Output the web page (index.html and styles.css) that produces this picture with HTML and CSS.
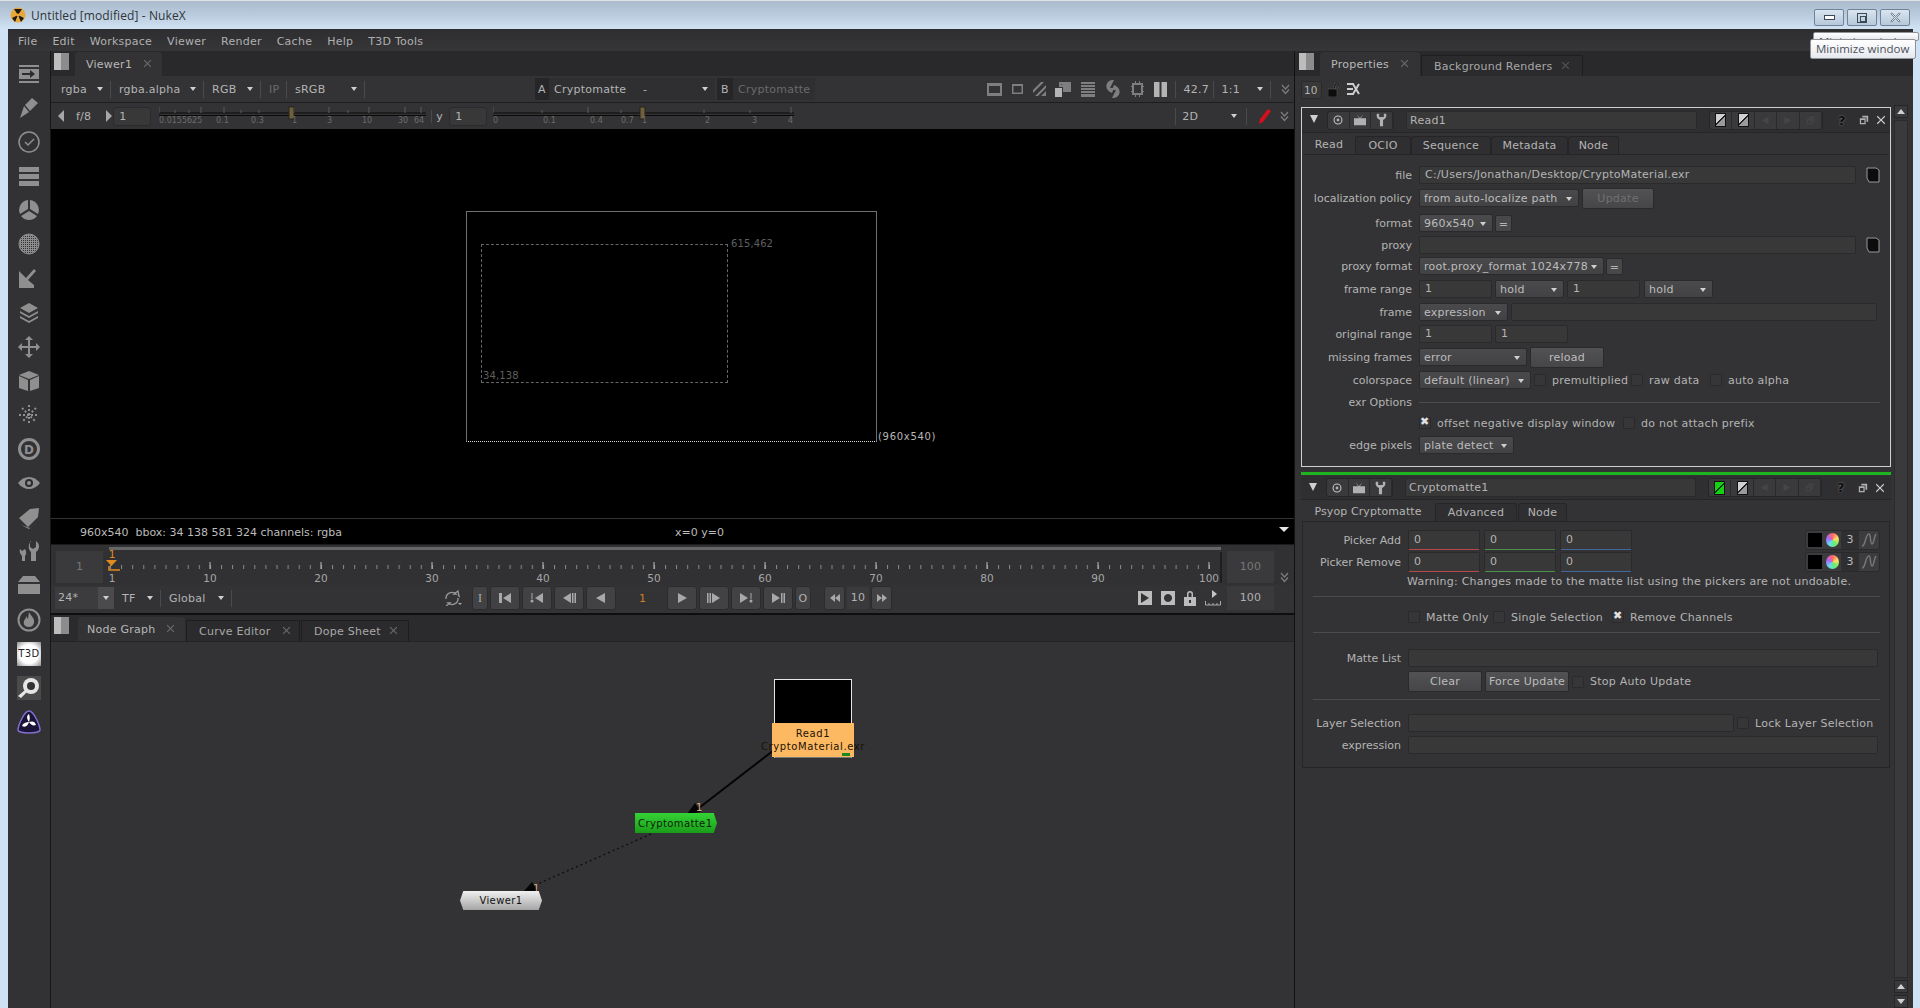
FILE: index.html
```html
<!DOCTYPE html>
<html lang="en">
<head>
    <meta charset="UTF-8">
    <title>Untitled [modified] - NukeX</title>
    <link rel="stylesheet" href="styles.css">
</head>
<body>
    <svg class="defs" width="0" height="0">
        <defs>
            <symbol id="i-play" viewBox="0 0 12 12"><path d="M2 1l9 5-9 5z"/></symbol>
            <symbol id="i-back" viewBox="0 0 12 12"><path d="M10 1L1 6l9 5z"/></symbol>
            <symbol id="i-first" viewBox="0 0 14 12"><path d="M1 1h3v10H1zM13 1L5 6l8 5z"/></symbol>
            <symbol id="i-last" viewBox="0 0 14 12"><path d="M1 1l8 5-8 5zM10 1h1.500v10H10zM12.500 1H14v10h-1.500z"/></symbol>
            <symbol id="i-stepb" viewBox="0 0 14 12"><path d="M9 1L1 6l8 5zM10 1h1.500v10H10zM12.500 1H14v10h-1.500z"/></symbol>
            <symbol id="i-stepf" viewBox="0 0 14 12"><path d="M0 1h1.500v10H0zM2.500 1H4v10H2.500zM5 1l8 5-8 5z"/></symbol>
            <symbol id="i-keyb" viewBox="0 0 14 12"><path d="M13 1L5 6l8 5z"/><circle cx="2" cy="9" r="1.500"/><path d="M1.500 1h1v6h-1z"/></symbol>
            <symbol id="i-keyf" viewBox="0 0 14 12"><path d="M1 1l8 5-8 5z"/><circle cx="12" cy="9" r="1.500"/><path d="M11.500 1h1v6h-1z"/></symbol>
            <symbol id="i-rew" viewBox="0 0 12 12"><path d="M6 2L1 6l5 4zM11 2L6 6l5 4z"/></symbol>
            <symbol id="i-fwd" viewBox="0 0 12 12"><path d="M1 2l5 4-5 4zM6 2l5 4-5 4z"/></symbol>
            <symbol id="i-tv" viewBox="0 0 16 14"><path d="M1 5h14v8H1zM4 0l4 5-1 0zM12 0L8 5l1 0z"/></symbol>
            <symbol id="i-wrench" viewBox="0 0 14 18"><path d="M1 1c-1 4 1 7 4 8v8h4V9c3-1 5-4 4-8l-3 0v4H4V1z"/></symbol>
            <symbol id="i-dot" viewBox="0 0 14 14"><circle cx="7" cy="7" r="5.500" fill="none" stroke="currentColor" stroke-width="1.500"/><circle cx="7" cy="7" r="2"/></symbol>
            <symbol id="i-float" viewBox="0 0 12 12"><path d="M4 1h7v7H9V3H4zM1 4h7v7H1zm1.500 2v3.500h4V6z"/></symbol>
            <symbol id="i-close" viewBox="0 0 12 12"><path d="M2 1l4 4 4-4 1 1-4 4 4 4-1 1-4-4-4 4-1-1 4-4-4-4z"/></symbol>
            <symbol id="i-folder" viewBox="0 0 14 16"><path d="M1 1h9l3 2v12H3L1 11z" fill="#0c0c0c" stroke="#999" stroke-width="1"/></symbol>
            <symbol id="i-curve" viewBox="0 0 16 16"><path d="M1 14C5 14 4 2 8 2c2 0 1 10 3 10 2 0 2-8 4-10" fill="none" stroke="currentColor" stroke-width="1.500"/></symbol>
            <symbol id="i-chev" viewBox="0 0 9 11"><path d="M1 1l3.500 4L8 1M1 5.500l3.500 4 3.500-4" fill="none" stroke="#7d7d7d" stroke-width="1.200"/></symbol>
        </defs>
    </svg>

    <header class="titlebar">
        <svg class="app-logo" width="16" height="16" viewBox="0 0 16 16">
            <circle cx="8" cy="8" r="7.500" fill="#e9a93a"/>
            <path d="M8 8L4 2h8zM8 8l6 3-3 4zM8 8l-6 3 3 4z" fill="#1d1a14"/>
            <circle cx="8" cy="8" r="1.500" fill="#e9a93a"/>
        </svg>
        <span class="title-text">Untitled [modified] - NukeX</span>
        <div class="win-buttons">
            <button class="win-btn"><span class="win-min"></span></button>
            <button class="win-btn"><span class="win-max"></span></button>
            <button class="win-btn"><svg width="13" height="11" viewBox="0 0 12 12"><use href="#i-close" fill="#e8eef5" stroke="#4b5a6a" stroke-width=".8"/></svg></button>
        </div>
        <div class="tooltip tooltip-ghost">Minimize window</div>
        <div class="tooltip">Minimize window</div>
    </header>

    <div class="app">
        <nav class="menubar">
            <span>File</span><span>Edit</span><span>Workspace</span><span>Viewer</span><span>Render</span><span>Cache</span><span>Help</span><span>T3D Tools</span>
        </nav>

        <div class="workspace">
            <aside class="sidebar">
                <svg viewBox="0 0 24 24"><path d="M2 3h20v2H2zM2 19h20v2H2zM2 7h20v10H2z"/><path d="M5 11h8V8l5 4-5 4v-3H5z" fill="#2c2c2e"/></svg>
                <svg viewBox="0 0 24 24"><path d="M8 9l7-7 6 5-8 8zM7 10l5 6-9 6z"/></svg>
                <svg viewBox="0 0 24 24"><circle cx="12" cy="12" r="10" fill="none" stroke="#8f8f8f" stroke-width="1.500"/><path d="M8 12l3 3 6-6" fill="none" stroke="#8f8f8f" stroke-width="1.500"/></svg>
                <svg viewBox="0 0 24 24"><path d="M2 3h20v5H2zM2 10h20v5H2zM2 17h20v5H2z"/></svg>
                <svg viewBox="0 0 24 24"><path d="M11 2v9l-8 5A10 10 0 0 1 11 2zM13 2a10 10 0 0 1 8 14l-8-5zM4 18l8-5 8 5a10 10 0 0 1-16 0z"/></svg>
                <svg viewBox="0 0 24 24"><defs><pattern id="hatch" width="2" height="2" patternUnits="userSpaceOnUse"><rect width="2" height="2" fill="#8c8c8c"/><rect width="1" height="1" fill="#333"/></pattern></defs><circle cx="12" cy="12" r="10" fill="url(#hatch)" stroke="#8f8f8f"/></svg>
                <svg viewBox="0 0 24 24"><path d="M2 4l7 7 8-9 2 2-8 9 6 5v3H2z"/></svg>
                <svg viewBox="0 0 24 24"><path d="M12 2l9 5-9 5-9-5zM3 10l9 5 9-5v2l-9 5-9-5zM3 15l9 5 9-5v2l-9 5-9-5z"/></svg>
                <svg viewBox="0 0 24 24"><path d="M12 1l4 4h-3v6h6V8l4 4-4 4v-3h-6v6h3l-4 4-4-4h3v-6H5v3l-4-4 4-4v3h6V5H8z"/></svg>
                <svg viewBox="0 0 24 24"><path d="M12 2l10 4-10 4L2 6zM2 7l9 4v11l-9-3zM22 7l-9 4v11l9-3z"/></svg>
                <svg viewBox="0 0 24 24"><g fill="none" stroke="#8f8f8f" stroke-width="2" stroke-dasharray="2 2"><path d="M12 2v20M2 12h20M5 5l14 14M19 5L5 19"/></g></svg>
                <svg viewBox="0 0 24 24"><circle cx="12" cy="12" r="9.500" fill="none" stroke="#8f8f8f" stroke-width="3"/><text x="12" y="16.500" text-anchor="middle" class="deep-letter">D</text></svg>
                <svg viewBox="0 0 24 24"><path d="M1 12c6-8 16-8 22 0-6 8-16 8-22 0z"/><circle cx="12" cy="12" r="4" fill="#2c2c2e"/><circle cx="12" cy="12" r="2"/></svg>
                <svg viewBox="0 0 24 24"><path d="M2 13L13 4l9-1-1 9-10 10zM4 20l9 3 8-7-9 8z"/></svg>
                <svg viewBox="0 0 24 24"><path d="M13 2v6l3 2 3-2V2c4 3 4 8 0 11v9h-5v-9c-3-2-3-8 0-11zM3 10l2 2 3-2c2 3 1 6 0 7v5H5v-5c-2-2-3-5-2-7z"/></svg>
                <svg viewBox="0 0 24 24"><path d="M6 3h12l5 6H1zM1 11h22v10H1z"/></svg>
                <svg viewBox="0 0 24 24"><circle cx="12" cy="12" r="10.500" fill="none" stroke="#8f8f8f" stroke-width="2"/><path d="M12 4c2 4 6 6 5 11-1 3-3 4-5 4-4 0-6-3-5-6 1-2 2-2 2-5l2 3z"/></svg>
                <div class="t3d-icon">T3D</div>
                <svg class="big-icon" viewBox="0 0 24 24"><rect width="24" height="24" fill="#4a4a4a"/><circle cx="14" cy="10" r="8" fill="#e6e6e6"/><circle cx="14" cy="10" r="4" fill="#333"/><path d="M1 20l7-6 2 2-6 6z" fill="#e6e6e6"/></svg>
                <svg class="big-icon" viewBox="0 0 24 24"><path d="M12 1c5 0 11 15 11 19 0 2-6 3-11 3S1 22 1 20C1 16 7 1 12 1z" fill="#1b1436" stroke="#7f6fd0" stroke-width="1.500"/><path d="M12 12c-2-3-3-6 0-8 1 3 1 5 0 8zM12 12c3-1 6-1 7 3-3 1-5 0-7-3zM12 12c-1 3-3 6-7 4 1-3 4-4 7-4z" fill="#fff"/></svg>
            </aside>

            <main class="left">
                <div class="tabbar">
                    <span class="pane-icon"></span>
                    <span class="tab tab-on tab-viewer">Viewer1<svg width="9" height="9"><use href="#i-close"/></svg></span>
                </div>

                <div class="toolbar">
                    <span class="tool w50">rgba<i class="caret"></i></span>
                    <span class="tool w93">rgba.alpha<i class="caret"></i></span>
                    <span class="tool w57">RGB<i class="caret"></i></span>
                    <span class="tool w26 dim">IP</span>
                    <span class="tool w78">sRGB<i class="caret"></i></span>
                    <span class="abox first-abox">A</span>
                    <span class="inbox w81">Cryptomatte</span>
                    <span class="inbox w85 dash">-<i class="caret"></i></span>
                    <span class="abox bbox-gap">B</span>
                    <span class="inbox w82 dim">Cryptomatte</span>
                    <div class="tool-icons">
                        <svg width="15" height="15" viewBox="0 0 15 15"><path d="M0 1h15v13H0zm2 3v7h11V4z"/></svg>
                        <svg width="11" height="12" viewBox="0 0 11 12"><path d="M0 1h11v10H0zm1.500 2v6.500h8V3z"/></svg>
                        <svg width="13" height="14" viewBox="0 0 13 14"><path d="M0 8l8-8h3L0 11zM2 14L13 3v3l-8 8zM8 14l5-5v5z"/></svg>
                        <svg width="16" height="15" viewBox="0 0 16 15"><path d="M4 0h12v10H8V5H4zm2 2v1h8v5h-4V5z"/><path d="M0 6h7v9H0z" fill="#b4b4b4"/></svg>
                        <svg width="14" height="15" viewBox="0 0 14 15"><path d="M0 0h14v2H0zM0 3h14v2H0zM0 6h14v2H0zM0 9h14v2H0zM0 12h14v3H0z"/></svg>
                        <svg width="16" height="18" viewBox="0 0 16 18"><path d="M9 0L5 8h4L7 13C1 11 0 5 3 2c2-2 4-2 6-2zM7 18l4-8H7l2-5c6 2 7 8 4 11-2 2-4 2-6 2z"/></svg>
                        <svg width="13" height="16" viewBox="0 0 13 16"><path d="M4 0h1v2h3V0h1v2h3v3h1v1h-1v4h1v1h-1v3H9v2H8v-2H5v2H4v-2H1v-3H0v-1h1V6H0V5h1V2h3zM3 4v8h7V4z"/></svg>
                        <svg width="13" height="15" viewBox="0 0 13 15"><path d="M0 0h5.500v15H0zM7.500 0H13v15H7.500z" fill="#b4b4b4"/></svg>
                    </div>
                    <span class="tool zoom-val">42.7</span>
                    <span class="tool w57 ratio">1:1<i class="caret"></i></span>
                    <svg class="chevrons" width="9" height="11"><use href="#i-chev"/></svg>
                </div>

                <div class="toolbar toolbar-2">
                    <i class="arrow-l"></i>
                    <span class="fstop">f/8</span>
                    <i class="arrow-r"></i>
                    <span class="inbox gain-box">1</span>
                    <svg class="slider slider-a" width="267" height="24">
                        <path class="track" d="M0 9h267M0 11.500h267"/>
                        <path class="tick" d="M0 3v6M16 6v3M30 6v3M42 3v6M65 3v6M82 6v3M100 6v3M135 3v6M170 3v6M189 6v3M210 3v6M246 3v6M262 3v6"/>
                        <rect class="handle" x="130" y="3" width="5" height="12"/>
                        <text x="0" y="19">0.0155625</text><text x="57" y="19">0.1</text><text x="92" y="19">0.3</text><text x="133" y="19">1</text><text x="168" y="19">3</text><text x="203" y="19">10</text><text x="239" y="19">30</text><text x="255" y="19">64</text>
                    </svg>
                    <span class="y-label">y</span>
                    <span class="inbox gain-box">1</span>
                    <svg class="slider slider-b" width="301" height="24">
                        <path class="track" d="M0 9h301M0 11.500h301"/>
                        <path class="tick" d="M0 3v6M49 6v3M95 3v6M128 6v3M148 3v6M211 6v3M257 6v3M298 3v6"/>
                        <rect class="handle" x="147" y="3" width="5" height="12"/>
                        <text x="0" y="19">0</text><text x="50" y="19">0.1</text><text x="97" y="19">0.4</text><text x="128" y="19">0.7</text><text x="149" y="19">1</text><text x="212" y="19">2</text><text x="259" y="19">3</text><text x="295" y="19">4</text>
                    </svg>
                    <span class="tool view-mode">2D<i class="caret"></i></span>
                    <svg class="pen" width="12" height="15" viewBox="0 0 12 15"><path d="M9 0l3 2-8 11-4 2 1-5z" fill="#d3111c"/></svg>
                    <svg class="chevrons chev-2" width="9" height="11"><use href="#i-chev"/></svg>
                </div>

                <div class="viewport">
                    <div class="format-box"></div>
                    <div class="bbox-box"></div>
                    <span class="vp-label vp-tr">615,462</span>
                    <span class="vp-label vp-bl">34,138</span>
                    <span class="vp-label vp-size">(960x540)</span>
                </div>

                <div class="infobar">
                    <span class="info-main">960x540&nbsp; bbox: 34 138 581 324 channels: rgba</span>
                    <span class="info-pos">x=0 y=0</span>
                    <i class="info-arrow"></i>
                </div>

                <div class="timeline">
                    <span class="frame-box">1</span>
                    <svg class="ruler" width="1119" height="41">
                        <defs>
                            <pattern id="minor-ticks" x="7" width="11.100" height="41" patternUnits="userSpaceOnUse"><rect width="1" height="41" fill="#8a8a8a"/></pattern>
                        </defs>
                        <rect x="6" y="2" width="1112" height="3" fill="#666"/>
                        <rect x="7" y="20" width="1100" height="4" fill="url(#minor-ticks)"/>
                        <path class="major" d="M107 17v7M218 17v7M329 17v7M440 17v7M551 17v7M662 17v7M773 17v7M884 17v7M995 17v7M1106 17v7"/>
                        <path d="M1118 7v31" stroke="#0c0c0c"/>
                        <path d="M3 15h11l-5.500 6z" fill="#e08a1e"/><path d="M6 21v4h11" fill="none" stroke="#e08a1e" stroke-width="1.500"/>
                        <text class="cur" x="9" y="13">1</text>
                        <text x="9" y="37">1</text><text x="107" y="37">10</text><text x="218" y="37">20</text><text x="329" y="37">30</text><text x="440" y="37">40</text><text x="551" y="37">50</text><text x="662" y="37">60</text><text x="773" y="37">70</text><text x="884" y="37">80</text><text x="995" y="37">90</text><text x="1106" y="37">100</text>
                    </svg>
                    <span class="frame-box frame-end">100</span>
                    <svg class="chevrons chev-3" width="9" height="11"><use href="#i-chev"/></svg>
                </div>

                <div class="transport">
                    <span class="fps">24*</span><span class="fps-drop"><i class="caret"></i></span>
                    <span class="tool w39 tf">TF<i class="caret"></i></span>
                    <span class="tool w71">Global<i class="caret"></i></span>
                    <svg class="loop" width="18" height="16" viewBox="0 0 18 16"><path d="M2 9a6 6 0 0 1 10-5h-2l4-3 1 5-1-1M14 8a6 6 0 0 1-10 5h2l-4 3" fill="none" stroke="#999" stroke-width="1.300"/><path d="M14 13h4l-2 2z" fill="#aaa"/></svg>
                    <button class="tbtn w16 serif">I</button>
                    <button class="tbtn w30"><svg><use href="#i-first"/></svg></button>
                    <button class="tbtn w30"><svg><use href="#i-keyb"/></svg></button>
                    <button class="tbtn w30"><svg><use href="#i-stepb"/></svg></button>
                    <button class="tbtn w30"><svg><use href="#i-back"/></svg></button>
                    <span class="cur-frame">1</span>
                    <button class="tbtn w30"><svg><use href="#i-play"/></svg></button>
                    <button class="tbtn w30"><svg><use href="#i-stepf"/></svg></button>
                    <button class="tbtn w30"><svg><use href="#i-keyf"/></svg></button>
                    <button class="tbtn w30"><svg><use href="#i-last"/></svg></button>
                    <button class="tbtn w16">O</button>
                    <button class="tbtn w21 skip"><svg><use href="#i-rew"/></svg></button>
                    <span class="inc">10</span>
                    <button class="tbtn w21"><svg><use href="#i-fwd"/></svg></button>
                    <div class="transport-right">
                        <svg width="14" height="14" viewBox="0 0 14 14"><path fill-rule="evenodd" d="M0 0h14v14H0zM3 2v10l8-5z"/></svg>
                        <svg width="14" height="14" viewBox="0 0 14 14"><path fill-rule="evenodd" d="M0 0h14v14H0zM7 3a4 4 0 1 0 .01 0z"/></svg>
                        <svg width="12" height="16" viewBox="0 0 12 16"><path fill-rule="evenodd" d="M3 7V4a3 3 0 0 1 6 0v3h3v9H0V7zm1.500 0h3V4a1.500 1.500 0 0 0-3 0zM5 10v3h2v-3z"/></svg>
                        <svg width="16" height="16" viewBox="0 0 16 16"><path d="M7 0l5 4-5 4z" fill="#c4c4c4"/><path d="M.5 11v4h15v-4M4 13v2M8 13v2M12 13v2" fill="none" stroke="#aaa"/></svg>
                        <span class="frame-box frame-end tr-end">100</span>
                    </div>
                </div>

                <div class="pane-split"></div>

                <div class="tabbar tabbar-graph">
                    <span class="pane-icon"></span>
                    <span class="tab tab-on tab-node">Node Graph<svg width="9" height="9"><use href="#i-close"/></svg></span>
                    <span class="tab tab-curve">Curve Editor<svg width="9" height="9"><use href="#i-close"/></svg></span>
                    <span class="tab tab-dope">Dope Sheet<svg width="9" height="9"><use href="#i-close"/></svg></span>
                </div>

                <div class="nodegraph">
                    <svg class="edges" width="1243" height="367">
                        <path d="M723 108L644 169" stroke="#050505" stroke-width="2"/>
                        <path d="M636 172l14-2-6-9z" fill="#050505"/>
                        <path d="M600 192L482 244" stroke="#111" stroke-width="1.500" stroke-dasharray="2 3"/>
                        <path d="M473 249l14 0-6-9z" fill="#050505"/>
                        <text x="645" y="169">1</text>
                        <text x="482" y="250">1</text>
                    </svg>
                    <div class="node-read">
                        <div class="read-thumb"></div>
                        <div class="read-label"><span>Read1</span><span>CryptoMaterial.exr</span><i class="read-dot"></i></div>
                    </div>
                    <div class="node-crypto">Cryptomatte1</div>
                    <div class="node-viewer">Viewer1</div>
                </div>
            </main>

            <section class="right">
                <div class="tabbar">
                    <span class="pane-icon pane-right"></span>
                    <span class="tab tab-on tab-props">Properties<svg width="9" height="9"><use href="#i-close"/></svg></span>
                    <span class="tab tab-bg">Background Renders<svg width="9" height="9"><use href="#i-close"/></svg></span>
                </div>
                <div class="props-tools">
                    <span class="inbox max-panels">10</span>
                    <svg width="13" height="14" viewBox="0 0 13 14"><path d="M0 6h9v8H0zM6 6V3a3 3 0 0 1 6 0v2h-1.500V3a1.500 1.500 0 0 0-3 0v3z" fill="#0d0d0d" stroke="#666" stroke-width=".5"/></svg>
                    <svg width="13" height="12" viewBox="0 0 13 12"><path d="M0 0h7v2H0zM0 5h6v2H0zM0 10h7v2H0z" fill="#ccc"/><path d="M6 1l6 10M12 1L6 11" stroke="#ccc" stroke-width="2"/></svg>
                </div>

                <div class="props-scroll">
                    <div class="props-col">
                        <section class="panel panel-read">
                            <div class="panel-head">
                                <i class="head-arrow"></i>
                                <div class="head-group">
                                    <span><svg width="10" height="10"><use href="#i-dot"/></svg></span>
                                    <span><svg width="14" height="12"><use href="#i-tv"/></svg></span>
                                    <span><svg width="11" height="14"><use href="#i-wrench"/></svg></span>
                                </div>
                                <span class="inbox head-name">Read1</span>
                                <div class="head-group head-colors">
                                    <span><i class="swatch"></i></span>
                                    <span><i class="swatch"></i></span>
                                    <span><svg class="ghost" width="11" height="9"><use href="#i-back"/></svg></span>
                                    <span><svg class="ghost" width="11" height="9"><use href="#i-play"/></svg></span>
                                    <span><svg class="ghost" width="11" height="9"><use href="#i-float"/></svg></span>
                                </div>
                                <span class="head-help">?</span>
                                <svg class="head-float" width="10" height="10"><use href="#i-float"/></svg>
                                <svg class="head-x" width="10" height="10"><use href="#i-close"/></svg>
                            </div>
                            <div class="knob-tabs">
                                <span class="ktab ktab-on ktab-read">Read</span>
                                <span class="ktab ktab-ocio">OCIO</span>
                                <span class="ktab ktab-seq">Sequence</span>
                                <span class="ktab ktab-meta">Metadata</span>
                                <span class="ktab ktab-node">Node</span>
                            </div>
                            <div class="knobs">
                                <div class="row"><label>file</label><span class="inbox w437">C:/Users/Jonathan/Desktop/CryptoMaterial.exr</span><svg class="folder" width="14" height="16"><use href="#i-folder"/></svg></div>
                                <div class="row mt1"><label>localization policy</label><span class="sel w160">from auto-localize path<i class="caret"></i></span><button class="btn w72 dim">Update</button></div>
                                <div class="row mt3"><label>format</label><span class="sel w74">960x540<i class="caret"></i></span><span class="eq">=</span></div>
                                <div class="row"><label>proxy</label><span class="inbox w437"></span><svg class="folder" width="14" height="16"><use href="#i-folder"/></svg></div>
                                <div class="row mt-1"><label>proxy format</label><span class="sel w185">root.proxy_format 1024x778<i class="caret"></i></span><span class="eq">=</span></div>
                                <div class="row mt1"><label>frame range</label><span class="inbox w73">1</span><span class="sel w69">hold<i class="caret"></i></span><span class="inbox w73">1</span><span class="sel w69 ml1">hold<i class="caret"></i></span></div>
                                <div class="row mt1"><label>frame</label><span class="sel w89">expression<i class="caret"></i></span><span class="inbox w366"></span></div>
                                <div class="row"><label>original range</label><span class="inbox w73">1</span><span class="inbox w73">1</span></div>
                                <div class="row mt1"><label>missing frames</label><span class="sel w108">error<i class="caret"></i></span><button class="btn w74">reload</button></div>
                                <div class="row mt1"><label>colorspace</label><span class="sel w112">default (linear)<i class="caret"></i></span><i class="cb"></i><span class="cb-text w76">premultiplied</span><i class="cb"></i><span class="cb-text w58">raw data</span><i class="cb"></i><span class="cb-text">auto alpha</span></div>
                                <div class="row"><label>exr Options</label><hr class="rule"></div>
                                <div class="row mt-1"><label></label><i class="cb cb-on"></i><span class="cb-text w183">offset negative display window</span><i class="cb"></i><span class="cb-text">do not attach prefix</span></div>
                                <div class="row"><label>edge pixels</label><span class="sel w95">plate detect<i class="caret"></i></span></div>
                            </div>
                        </section>

                        <div class="panel-bar"></div>

                        <section class="panel panel-crypto">
                            <div class="panel-head">
                                <i class="head-arrow"></i>
                                <div class="head-group">
                                    <span><svg width="10" height="10"><use href="#i-dot"/></svg></span>
                                    <span><svg width="14" height="12"><use href="#i-tv"/></svg></span>
                                    <span><svg width="11" height="14"><use href="#i-wrench"/></svg></span>
                                </div>
                                <span class="inbox head-name">Cryptomatte1</span>
                                <div class="head-group head-colors">
                                    <span><i class="swatch swatch-green"></i></span>
                                    <span><i class="swatch"></i></span>
                                    <span><svg class="ghost" width="11" height="9"><use href="#i-back"/></svg></span>
                                    <span><svg class="ghost" width="11" height="9"><use href="#i-play"/></svg></span>
                                    <span><svg class="ghost" width="11" height="9"><use href="#i-float"/></svg></span>
                                </div>
                                <span class="head-help">?</span>
                                <svg class="head-float" width="10" height="10"><use href="#i-float"/></svg>
                                <svg class="head-x" width="10" height="10"><use href="#i-close"/></svg>
                            </div>
                            <div class="knob-tabs">
                                <span class="ktab ktab-on ktab-psyop">Psyop Cryptomatte</span>
                                <span class="ktab ktab-adv">Advanced</span>
                                <span class="ktab ktab-node2">Node</span>
                            </div>
                            <div class="knobs knobs-crypto">
                                <div class="row row-20"><label>Picker Add</label><span class="inbox w72 line-r">0</span><span class="inbox w72 line-g">0</span><span class="inbox w72 line-b">0</span><div class="picker"><i class="pick-black"></i><i class="pick-wheel"></i><span>3</span><svg width="16" height="16"><use href="#i-curve"/></svg></div></div>
                                <div class="row row-20 mt-2"><label>Picker Remove</label><span class="inbox w72 line-r">0</span><span class="inbox w72 line-g">0</span><span class="inbox w72 line-b">0</span><div class="picker"><i class="pick-black"></i><i class="pick-wheel"></i><span>3</span><svg width="16" height="16"><use href="#i-curve"/></svg></div></div>
                                <div class="row row-16 mt-3"><label></label><span class="warn">Warning: Changes made to the matte list using the pickers are not undoable.</span></div>
                                <hr class="divider space-a">
                                <div class="row row-16"><label></label><i class="cb"></i><span class="cb-text w64">Matte Only</span><i class="cb"></i><span class="cb-text w98">Single Selection</span><i class="cb cb-on"></i><span class="cb-text">Remove Channels</span></div>
                                <hr class="divider space-b">
                                <div class="row"><label>Matte List</label><span class="inbox w470"></span></div>
                                <div class="row row-21"><label></label><button class="btn w74">Clear</button><button class="btn w84">Force Update</button><i class="cb"></i><span class="cb-text">Stop Auto Update</span></div>
                                <hr class="divider space-c">
                                <div class="row"><label>Layer Selection</label><span class="inbox w326"></span><i class="cb"></i><span class="cb-text">Lock Layer Selection</span></div>
                                <div class="row"><label>expression</label><span class="inbox w470"></span></div>
                            </div>
                        </section>
                    </div>

                    <div class="scrollbar">
                        <span class="sb-btn"><i class="sb-up"></i></span>
                        <span class="sb-track"></span>
                        <span class="sb-btn"><i class="sb-up"></i></span>
                        <span class="sb-btn"><i class="sb-down"></i></span>
                    </div>
                </div>
            </section>
        </div>
    </div>
</body>
</html>
```

FILE: styles.css
```css
* { margin: 0; padding: 0; box-sizing: border-box; }
html, body { width: 1920px; height: 1008px; overflow: hidden; }
body {
    background: #cfe2f5;
    font-family: "DejaVu Sans", sans-serif;
    font-size: 11px;
    letter-spacing: .25px;
    color: #b4b4b4;
}
.defs { position: absolute; }
i { display: block; font-style: normal; }
button { font: inherit; letter-spacing: inherit; color: inherit; border: none; }

/* window frame */
.titlebar {
    height: 29px;
    position: relative;
    display: flex;
    align-items: center;
    padding-left: 10px;
    background: linear-gradient(#a9bbcd, #b9cbdc 50%, #d0e3f5);
    border-top: 1px solid #dfe3e8;
    color: #30343a;
    font-family: "Open Sans", sans-serif;
    font-size: 12px;
    letter-spacing: .1px;
}
.title-text { margin-left: 5px; }
.win-buttons { position: absolute; top: 8px; right: 10px; display: flex; gap: 3px; }
.win-btn {
    width: 30px;
    height: 17px;
    display: flex;
    align-items: center;
    justify-content: center;
    background: linear-gradient(#d9e5f0, #b6c8da);
    border: 1px solid #6f8399;
    border-radius: 2px;
}
.win-min { width: 11px; height: 5px; border: 1px solid #3c4a58; background: #fff; display: block; }
.win-max { width: 10px; height: 10px; border: 1px solid #3c4a58; position: relative; display: block; }
.win-max::after { content: ""; position: absolute; left: 2px; top: 2px; width: 4px; height: 4px; border: 1px solid #3c4a58; }
.tooltip {
    position: absolute;
    z-index: 5;
    left: 1810px;
    top: 38px;
    width: 106px;
    height: 20px;
    padding: 1px 0 0 5px;
    background: linear-gradient(#fff, #e6e8ee);
    border: 1px solid #8f9398;
    border-radius: 2px;
    color: #4c5058;
    font-size: 11.500px;
    letter-spacing: 0;
    white-space: nowrap;
}
.tooltip-ghost { left: 1813px; top: 31px; height: 9px; overflow: hidden; z-index: 4; }

.app { width: 1905px; height: 979px; margin-left: 8px; background: #333335; display: flex; flex-direction: column; }
.menubar {
    height: 22px;
    flex: none;
    display: flex;
    align-items: center;
    gap: 15px;
    padding: 2px 0 0 10px;
    background: linear-gradient(#2e2e30, #363638);
    color: #b0b0b0;
}
.workspace { flex: 1; display: flex; min-height: 0; }

/* sidebar */
.sidebar {
    width: 43px;
    flex: none;
    padding-top: 11px;
    display: flex;
    flex-direction: column;
    align-items: center;
    gap: 10.100px;
    background: #323234;
    border-right: 1px solid #161616;
}
.sidebar svg { width: 24px; height: 24px; flex: none; fill: #8f8f8f; }
.deep-letter { font-size: 12px; font-weight: bold; fill: #8f8f8f; }
.t3d-icon {
    width: 24px;
    height: 24px;
    flex: none;
    background: radial-gradient(#fff 55%, #8a8a8a);
    color: #222;
    font-size: 10px;
    line-height: 24px;
    text-align: center;
    letter-spacing: .4px;
}

.left { width: 1243px; flex: none; display: flex; flex-direction: column; }
.right { width: 619px; flex: none; display: flex; flex-direction: column; border-left: 1px solid #111; }

/* tabs */
.tabbar { height: 25px; flex: none; display: flex; align-items: flex-end; background: #29292b; position: relative; }
.pane-icon {
    align-self: flex-start;
    margin: 2px 0 0 3px;
    width: 15px;
    height: 17px;
    background: linear-gradient(90deg, #bdbdbd 50%, #8c8c8c 50%);
}
.pane-right { margin-left: 4px; }
.tab {
    height: 21px;
    display: flex;
    align-items: center;
    color: #a8a8a8;
    border: 1px solid #1e1e20;
    border-bottom: none;
    background: #2b2b2d;
    position: relative;
}
.tab svg { position: absolute; right: 10px; top: 5px; fill: #6b6b6b; }
.tab-on { height: 24px; background: #333335; color: #b8b8b8; border: none; border-radius: 4px 4px 0 0; }
.tab-on svg { top: 7px; }
.tab-viewer { margin-left: 6px; width: 87px; padding-left: 11px; }
.tabbar-graph { height: 26px; background: #2b2b2d; }
.tab-node { margin-left: 9px; width: 107px; padding-left: 9px; }
.tab-curve { margin-left: 1px; width: 114px; padding-left: 12px; }
.tab-curve svg { right: 8px; }
.tab-dope { margin-left: 1px; width: 108px; padding-left: 12px; }
.tab-props { margin-left: 6px; width: 100px; padding-left: 11px; }
.tab-props svg { right: 11px; }
.tab-bg { margin-left: 1px; width: 162px; padding-left: 12px; }
.tab-bg svg { fill: #555; right: 12px; }

/* viewer toolbars */
.toolbar { height: 26px; flex: none; display: flex; align-items: center; padding-left: 10px; background: #333335; }
.toolbar-2 { height: 27px; padding-left: 0; border-top: 1px solid #1d1d1f; position: relative; }
.tool { position: relative; height: 17px; line-height: 17px; padding-left: 8px; border-right: 1px solid #4a4a4c; flex: none; }
.tool:first-child { padding-left: 0; }
.caret {
    position: absolute;
    right: 7px;
    top: 50%;
    margin-top: -2px;
    width: 0;
    height: 0;
    border-left: 3px solid transparent;
    border-right: 3px solid transparent;
    border-top: 4px solid #cfcfcf;
}
.dim { color: #6a6a6a; }
.w16 { width: 16px; }
.w21 { width: 21px; }
.w26 { width: 26px; }
.w30 { width: 30px; }
.w39 { width: 39px; }
.w50 { width: 50px; }
.w57 { width: 57px; }
.w58 { width: 58px; }
.w64 { width: 64px; }
.w69 { width: 69px; }
.w71 { width: 71px; }
.w72 { width: 72px; }
.w73 { width: 73px; }
.w74 { width: 74px; }
.w76 { width: 76px; }
.w78 { width: 78px; }
.w81 { width: 81px; }
.w82 { width: 82px; }
.w84 { width: 84px; }
.w85 { width: 85px; }
.w89 { width: 89px; }
.w93 { width: 93px; }
.w95 { width: 95px; }
.w98 { width: 98px; }
.w108 { width: 108px; }
.w112 { width: 112px; }
.w160 { width: 160px; }
.w183 { width: 183px; }
.w185 { width: 185px; }
.w326 { width: 326px; }
.w366 { width: 366px; }
.w437 { width: 437px; }
.w470 { width: 470px; }
.abox { width: 14px; height: 22px; line-height: 23px; text-align: center; background: #262628; flex: none; }
.first-abox { margin-left: 170px; }
.bbox-gap { margin-left: 2px; width: 16px; }
.inbox {
    height: 100%;
    line-height: 16px;
    padding-left: 5px;
    background: #383839;
    border: 1px solid #2a2a2c;
    border-radius: 2px;
    flex: none;
    white-space: nowrap;
    overflow: hidden;
    position: relative;
}
.toolbar > .inbox { height: 22px; line-height: 23px; background: #2f2f31; border: none; border-radius: 0; }
.dash { padding-left: 13px; }
.tool-icons { margin-left: 172px; display: flex; align-items: center; gap: 9.800px; fill: #7e7e7e; flex: none; }
.zoom-val { margin-left: 8px; padding-left: 8px; width: 39px; border-left: 1px solid #4a4a4c; overflow: hidden; }
.ratio { position: relative; padding-left: 8px; }
.chevrons { margin-left: 10px; flex: none; }
.arrow-l, .arrow-r { width: 0; height: 0; border-top: 6px solid transparent; border-bottom: 6px solid transparent; flex: none; }
.arrow-l { margin-left: 7px; border-right: 6px solid #a6a6a6; }
.arrow-r { margin-left: 15px; border-left: 6px solid #a6a6a6; }
.fstop { margin-left: 12px; }
.toolbar > .gain-box { margin-left: 1px; width: 38px; height: 19px; line-height: 18px; background: #383839; border: 1px solid #2a2a2c; border-radius: 3px; }
.slider { margin-left: 8px; flex: none; }
.slider text { font-size: 8px; letter-spacing: 0; fill: #6b6b6b; }
.track { stroke: #0a0a0a; fill: none; }
.tick { stroke: #5c5c5c; fill: none; }
.handle { fill: #6f5f3e; stroke: #2a2418; }
.y-label { margin-left: 5px; width: 12px; border-left: 1px solid #4a4a4c; padding-left: 4px; box-sizing: content-box; }
.slider-b { margin-left: 6px; }
.view-mode { margin-left: 381px; width: 72px; padding-left: 6px; border-left: 1px solid #4a4a4c; }
.view-mode .caret { right: 9px; }
.pen { margin-left: 12px; flex: none; }
.chev-2 { margin-left: 9px; }

/* viewer */
.viewport { height: 390px; flex: none; background: #000; position: relative; border-bottom: 1px solid #333; }
.format-box { position: absolute; left: 415px; top: 82px; width: 411px; height: 231px; border: 1px solid #6f6f6f; border-bottom: 1px dotted #ddd; }
.bbox-box { position: absolute; left: 430px; top: 115px; width: 247px; height: 139px; border: 1px dashed #666; }
.vp-label { position: absolute; font-size: 10px; letter-spacing: .1px; line-height: 12px; color: #5f5f5f; }
.vp-tr { left: 680px; top: 109px; }
.vp-bl { left: 432px; top: 241px; }
.vp-size { left: 827px; top: 302px; color: #b8b8b8; letter-spacing: .7px; }
.infobar { height: 25px; flex: none; position: relative; background: #000; color: #bcbcbc; line-height: 28px; }
.info-main { position: absolute; left: 29px; letter-spacing: 0; }
.info-pos { position: absolute; left: 624px; letter-spacing: 0; }
.info-arrow {
    position: absolute;
    left: 1228px;
    top: 8px;
    width: 0;
    height: 0;
    border-left: 5px solid transparent;
    border-right: 5px solid transparent;
    border-top: 5px solid #e4e4e4;
}

/* timeline */
.timeline { height: 41px; flex: none; display: flex; background: #313133; border-top: 1px solid #1b1b1d; padding-left: 5px; }
.frame-box { width: 47px; height: 32px; margin-top: 6px; background: #3a3a3c; text-align: center; line-height: 32px; color: #777; flex: none; }
.frame-end { margin-left: 5px; }
.ruler { flex: none; }
.ruler text { font-size: 10.500px; letter-spacing: 0; fill: #a6a6a6; text-anchor: middle; }
.ruler .cur { fill: #e08a1e; }
.major { stroke: #c0c0c0; fill: none; }
.chev-3 { margin: 27px 0 0 6px; }

.transport { height: 28px; flex: none; display: flex; align-items: center; padding: 0 0 2px 4px; background: #333335; }
.fps { width: 43px; height: 22px; line-height: 22px; padding-left: 3px; background: #3c3c3e; flex: none; }
.fps-drop { width: 16px; height: 22px; background: #4b4b4d; position: relative; flex: none; }
.fps-drop .caret { right: 5px; }
.tf { margin-left: 8px; padding-left: 0; }
.loop { margin-left: 212px; margin-right: 10px; flex: none; }
.tbtn {
    height: 24px;
    margin-right: 2px;
    display: flex;
    align-items: center;
    justify-content: center;
    background: #424244;
    border: 1px solid #2b2b2d;
    border-radius: 3px;
    color: #b0b0b0;
    flex: none;
}
.tbtn svg { width: 14px; height: 12px; fill: #a8a8a8; }
.serif { font-family: "Liberation Serif", serif; font-size: 12px; }
.cur-frame { width: 49px; text-align: center; color: #c9802a; flex: none; }
.skip { margin-left: 11px; }
.skip svg, .skip + .inc + .tbtn svg { width: 12px; }
.inc { width: 22px; margin-right: 2px; height: 22px; line-height: 22px; text-align: center; background: #3a3a3c; flex: none; }
.transport-right { margin-left: auto; display: flex; align-items: center; gap: 9px; fill: #bcbcbc; padding-right: 20px; }
.tr-end { margin: 0 0 0 -3px; height: 24px; line-height: 24px; color: #b0b0b0; }
.pane-split { height: 2px; flex: none; background: #0e0e10; }

/* node graph */
.nodegraph { flex: 1; position: relative; background: #333335; border-top: 1px solid #232325; overflow: hidden; }
.edges { position: absolute; left: 0; top: 0; }
.edges text { font-size: 10px; letter-spacing: 0; fill: #e0b080; }
.node-read { position: absolute; left: 723px; top: 37px; width: 78px; height: 79px; border: 1px solid #e6e6e6; border-bottom-color: #777; }
.read-thumb { height: 43px; background: #000; }
.read-label {
    position: relative;
    height: 34px;
    margin: 0 -3px;
    padding-top: 5px;
    display: flex;
    flex-direction: column;
    align-items: center;
    background: #fdb962;
    color: #1c1206;
    font-size: 10px;
    letter-spacing: .6px;
    line-height: 12.500px;
    white-space: nowrap;
}
.read-dot { position: absolute; right: 4px; bottom: 1px; width: 8px; height: 3px; background: #1d8a1d; }
.node-crypto {
    position: absolute;
    left: 584px;
    top: 171px;
    width: 82px;
    height: 20px;
    line-height: 21px;
    padding-left: 3px;
    background: linear-gradient(#35d435, #1a9c1a);
    color: #0a1f0a;
    font-size: 10px;
    letter-spacing: .4px;
    white-space: nowrap;
    clip-path: polygon(0 0, 96% 0, 100% 50%, 96% 100%, 0 100%);
}
.node-viewer {
    position: absolute;
    left: 409px;
    top: 249px;
    width: 82px;
    height: 19px;
    line-height: 20px;
    text-align: center;
    background: linear-gradient(#f0f0f0, #a5a5a5);
    color: #111;
    font-size: 10px;
    letter-spacing: .4px;
    clip-path: polygon(4% 0, 96% 0, 100% 50%, 96% 100%, 4% 100%, 0 50%);
}

/* properties */
.props-tools { height: 31px; flex: none; display: flex; align-items: flex-start; gap: 6px; padding: 5px 0 0 6px; }
.props-tools .inbox { width: 21px; height: 18px; padding-left: 2px; font-size: 10.500px; letter-spacing: 0; }
.props-tools svg { margin-top: 2px; }
.props-scroll { flex: 1; display: flex; min-height: 0; }
.props-col { width: 590px; flex: none; margin-left: 6px; }
.panel-read { height: 360px; border: 1px solid #cfcfcf; }
.panel-bar { height: 3px; margin-top: 5px; background: #1fb31f; }
.panel-head { height: 25px; display: flex; align-items: center; padding-left: 8px; background: #2f2f31; fill: #b0b0b0; border-bottom: 1px solid #262628; }
.panel-crypto { margin-top: 1px; }
.panel-crypto .panel-head { height: 24px; }
.head-arrow { width: 0; height: 0; border-left: 4px solid transparent; border-right: 4px solid transparent; border-top: 8px solid #cfcfcf; margin: -2px 9px 0 0; }
.head-group { display: flex; height: 19px; width: 67px; border: 1px solid #262628; border-radius: 3px; background: #3a3a3c; flex: none; overflow: hidden; }
.head-group span { flex: 1; display: flex; align-items: center; justify-content: center; border-right: 1px solid #2a2a2c; color: #c4c4c4; }
.panel-head .inbox { margin-left: 12px; width: 291px; height: 19px; line-height: 17px; padding-left: 3px; }
.head-colors { width: 114px; margin-left: 12px; }
.ghost { fill: #454547; }
.swatch { width: 11px; height: 14px; border: 1px solid #111; background: linear-gradient(135deg, #d0d0d0 46%, #222 46%, #222 54%, #9a9a9a 54%); }
.swatch-green { background: linear-gradient(135deg, #16d016 46%, #0a3a0a 46%, #0a3a0a 54%, #16d016 54%); }
.head-help { margin-left: 15px; font-size: 13px; font-weight: bold; letter-spacing: 0; color: #0c0c0c; text-shadow: 0 0 2px #888; }
.head-float { margin-left: 13px; }
.head-x { margin-left: 7px; fill: #d0d0d0; }
.knob-tabs { height: 21px; display: flex; align-items: flex-end; background: #333335; padding-left: 1px; }
.ktab { height: 18px; line-height: 17px; border: 1px solid #252527; border-bottom: none; border-radius: 3px 3px 0 0; text-align: center; background: #2f2f31; flex: none; }
.ktab-on { height: 19px; background: #333335; border-color: #333335; }
.ktab-read { width: 52px; }
.ktab-ocio { width: 56px; }
.ktab-seq { width: 80px; }
.ktab-meta { width: 77px; }
.ktab-node { width: 51px; }
.ktab-psyop { width: 132px; letter-spacing: .1px; }
.ktab-adv { width: 82px; margin-left: 1px; }
.ktab-node2 { width: 49px; margin-left: 1px; }
.knobs { display: flex; flex-direction: column; gap: 4px; padding-top: 11px; border-top: 1px solid #252527; margin: 0 1px; }
.row { height: 18px; display: flex; align-items: center; gap: 3px; flex: none; }
.row > label { width: 109px; margin-right: 4px; text-align: right; flex: none; letter-spacing: 0; }
.row .inbox { height: 18px; }
.mt1 { margin-top: 1px; }
.mt3 { margin-top: 3px; }
.mt-1 { margin-top: -1px; }
.ml1 { margin-left: 1px; }
.sel {
    height: 18px;
    line-height: 17px;
    padding-left: 4px;
    position: relative;
    background: linear-gradient(#4a4a4c, #424244);
    border: 1px solid #2a2a2c;
    border-radius: 2px;
    flex: none;
    white-space: nowrap;
    color: #bcbcbc;
}
.sel .caret { right: 6px; top: 7px; margin: 0; }
.btn { height: 21px; background: linear-gradient(#525254, #464648); border: 1px solid #2a2a2c; border-radius: 2px; flex: none; color: #bcbcbc; }
.btn.dim { color: #707072; }
.eq { width: 17px; height: 17px; line-height: 17px; margin-left: -1px; text-align: center; background: #48484a; border: 1px solid #2a2a2c; border-radius: 2px; flex: none; }
.folder { margin-left: 7px; flex: none; }
.cb { width: 12px; height: 12px; border: 1px solid #2a2a2c; background: #363638; border-radius: 1px; flex: none; position: relative; }
.cb-on::after { content: "\2716"; position: absolute; left: 0; top: -3px; font-size: 11px; color: #e0e0e0; }
.cb-text { margin-left: 3px; white-space: nowrap; flex: none; }
.rule { flex: 1; height: 1px; margin-right: 9px; border: none; background: #4c4c4e; }
.divider { height: 1px; margin: 3px 9px 4px 10px; border: none; background: #4c4c4e; flex: none; }
.space-a { margin-bottom: 8px; }
.space-b { margin-bottom: 12px; }
.space-c { margin-bottom: 10px; }

.knobs-crypto { padding-top: 8px; height: 247px; gap: 4px; border: 1px solid #252527; }
.knobs-crypto .row > label { width: 98px; }
.row-20 { height: 20px; }
.row-20 .inbox { height: 20px; line-height: 18px; border-bottom: 1px solid; margin-right: 1px; }
.row-16 { height: 16px; }
.row-21 { height: 21px; }
.mt-2 { margin-top: -2px; }
.mt-3 { margin-top: -3px; }
.line-r { border-bottom-color: #b44a4a !important; }
.line-g { border-bottom-color: #4e8e4e !important; }
.line-b { border-bottom-color: #44679c !important; }
.warn { margin-left: -1px; white-space: nowrap; }
.picker { margin-left: auto; margin-right: 9px; display: flex; height: 20px; width: 75px; background: #3c3c3e; border: 1px solid #2a2a2c; border-radius: 3px; align-items: center; overflow: hidden; color: #777; }
.pick-black { width: 14px; height: 14px; margin: 0 2px; background: #000; flex: none; }
.pick-wheel { width: 13px; height: 14px; margin: 0 2px; border-radius: 50%; background: conic-gradient(#f66, #fd6, #6e6, #6de, #a6f, #f66); flex: none; }
.picker span { width: 18px; text-align: center; background: #2f2f31; height: 18px; line-height: 18px; color: #bcbcbc; flex: none; }
.picker svg { margin-left: 2px; flex: none; }

/* scrollbar */
.scrollbar { width: 14px; margin-left: 3px; margin-top: -2px; display: flex; flex-direction: column; gap: 2px; flex: none; }
.sb-btn { height: 13px; background: #3a3a3c; border: 1px solid #252527; display: flex; align-items: center; justify-content: center; flex: none; }
.sb-track { flex: 1; background: #3a3a3c; border: 1px solid #2b2b2d; }
.sb-up, .sb-down { width: 0; height: 0; border-left: 4px solid transparent; border-right: 4px solid transparent; }
.sb-up { border-bottom: 5px solid #cfcfcf; }
.sb-down { border-top: 5px solid #cfcfcf; }
```
